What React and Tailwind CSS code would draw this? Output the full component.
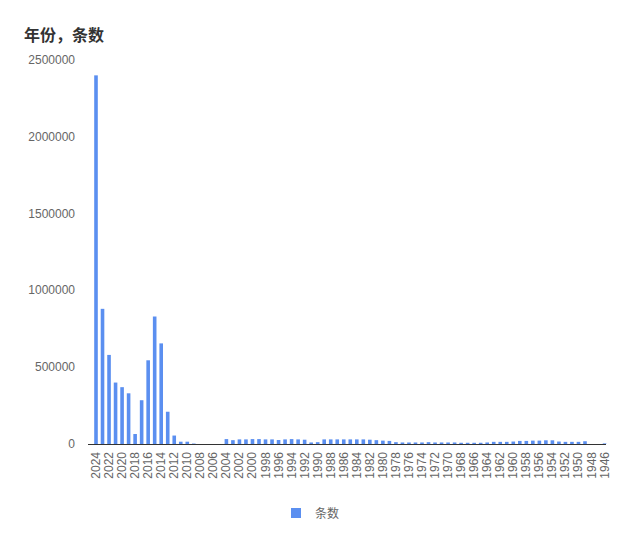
const vals = [2400,880,580,400,370,330,65,285,545,830,655,210,55,15,15,3,0,0,0,0,32,25,30,30,32,32,30,30,26,30,32,30,28,10,12,30,30,30,30,30,30,30,28,25,22,20,12,10,10,10,10,12,10,10,10,10,8,8,8,8,10,14,14,14,16,20,20,22,22,24,24,16,14,14,14,18,0,0,4];
const n = vals.length;
const x0 = 96, dx = 6.52, base = 444, scale = 384 / 2500;
const ticks = [0,500000,1000000,1500000,2000000,2500000];

export default function App() {
  return (
    <div className="w-[629px] h-[551px] bg-white relative" style={{fontFamily:'"Noto Sans CJK SC","Liberation Sans",sans-serif'}}>
      <div className="absolute left-[24px] top-[22px] text-[16px] font-bold text-[#333]">年份，条数</div>
      <svg width="629" height="551" className="absolute left-0 top-0" style={{fontFamily:'"Liberation Sans",sans-serif'}}>
        {ticks.map(t => (
          <text key={t} x="75" y={base - t/1000*scale + 4} textAnchor="end" fontSize="12" fill="#666">{t}</text>
        ))}
        {vals.map((v,i) => {
          const h = v*scale;
          return <rect key={i} x={x0 + i*dx - 1.8} y={base - h} width="3.6" height={h} fill="#5b8ff0" />;
        })}
        <line x1="88" y1={base+0.5} x2="606" y2={base+0.5} stroke="#333" strokeWidth="1" />
        {vals.map((v,i) => i%2===0 ? (
          <text key={i} transform={`translate(${x0 + i*dx + 4},${base+8}) rotate(-90)`} textAnchor="end" fontSize="12" fill="#666">{2024-i}</text>
        ) : null)}
      </svg>
      <div className="absolute left-[291px] top-[504px] flex items-center gap-[14px]">
        <div className="w-[10px] h-[10px] bg-[#5b8ff0]"></div>
        <span className="text-[12px] text-[#666]">条数</span>
      </div>
    </div>
  );
}
